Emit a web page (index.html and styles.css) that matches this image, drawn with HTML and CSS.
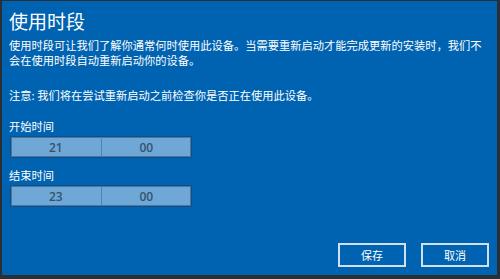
FILE: index.html
```html
<!DOCTYPE html>
<html>
<head>
  <title>使用时段</title>
  <link rel="stylesheet" href="styles.css">
</head>
<body>
  <div class="dialog">
    <h1 class="title">使用时段</h1>
    <p class="desc">使用时段可让我们了解你通常何时使用此设备。当需要重新启动才能完成更新的安装时，我们不会在使用时段自动重新启动你的设备。</p>
    <p class="note">注意: 我们将在尝试重新启动之前检查你是否正在使用此设备。</p>

    <div class="field">
      <div class="label">开始时间</div>
      <div class="picker">
        <span class="cell">21</span>
        <span class="cell">00</span>
      </div>
    </div>

    <div class="field field-end">
      <div class="label">结束时间</div>
      <div class="picker">
        <span class="cell">23</span>
        <span class="cell">00</span>
      </div>
    </div>

    <div class="actions">
      <button class="btn">保存</button>
      <button class="btn">取消</button>
    </div>
  </div>
</body>
</html>
```

FILE: styles.css
```css
html, body {
  margin: 0;
  padding: 0;
}

body {
  width: 500px;
  height: 279px;
  overflow: hidden;
  background-color: #9a9a9a;
  font-family: "Noto Sans CJK SC", "Noto Sans", sans-serif;
}

.dialog {
  box-sizing: border-box;
  width: 500px;
  height: 279px;
  display: flex;
  flex-direction: column;
  background-color: #0063b1;
  color: #ffffff;
  border-style: solid;
  border-color: #2a2f36;
  border-width: 1px 3px 4px 2px;
  padding: 8px 8px 8px 7px;
}

.title {
  margin: 0;
  font-size: 19px;
  font-weight: normal;
  line-height: 24px;
}

.desc,
.note {
  margin: 0;
  font-size: 11.25px;
  line-height: 15px;
}

.desc {
  margin-top: 5px;
}

.note {
  margin-top: 20px;
}

.field {
  margin-top: 16px;
}

.field-end {
  margin-top: 10px;
}

.label {
  font-size: 11.25px;
  line-height: 15px;
}

.picker {
  display: flex;
  width: 182px;
  height: 22px;
  box-sizing: border-box;
  margin-top: 2px;
  margin-left: 1px;
  background-color: #6fa7d6;
  border: 1px solid #1c4c7a;
  box-shadow: inset 0 0 0 1px #3f78ab;
}

.cell {
  flex: 1;
  display: flex;
  align-items: center;
  justify-content: center;
  font-family: "Open Sans", "Noto Sans", sans-serif;
  font-size: 12px;
  font-weight: 600;
  color: #34536f;
}

.cell + .cell {
  border-left: 1px solid #4d84b4;
}

.actions {
  margin-top: auto;
  display: flex;
  justify-content: flex-end;
  gap: 15px;
}

.btn {
  box-sizing: border-box;
  width: 68px;
  height: 24px;
  background: transparent;
  border: 2px solid #cfe1f1;
  color: #ffffff;
  font-family: "Noto Sans CJK SC", sans-serif;
  font-size: 11px;
  padding: 0;
}
```
